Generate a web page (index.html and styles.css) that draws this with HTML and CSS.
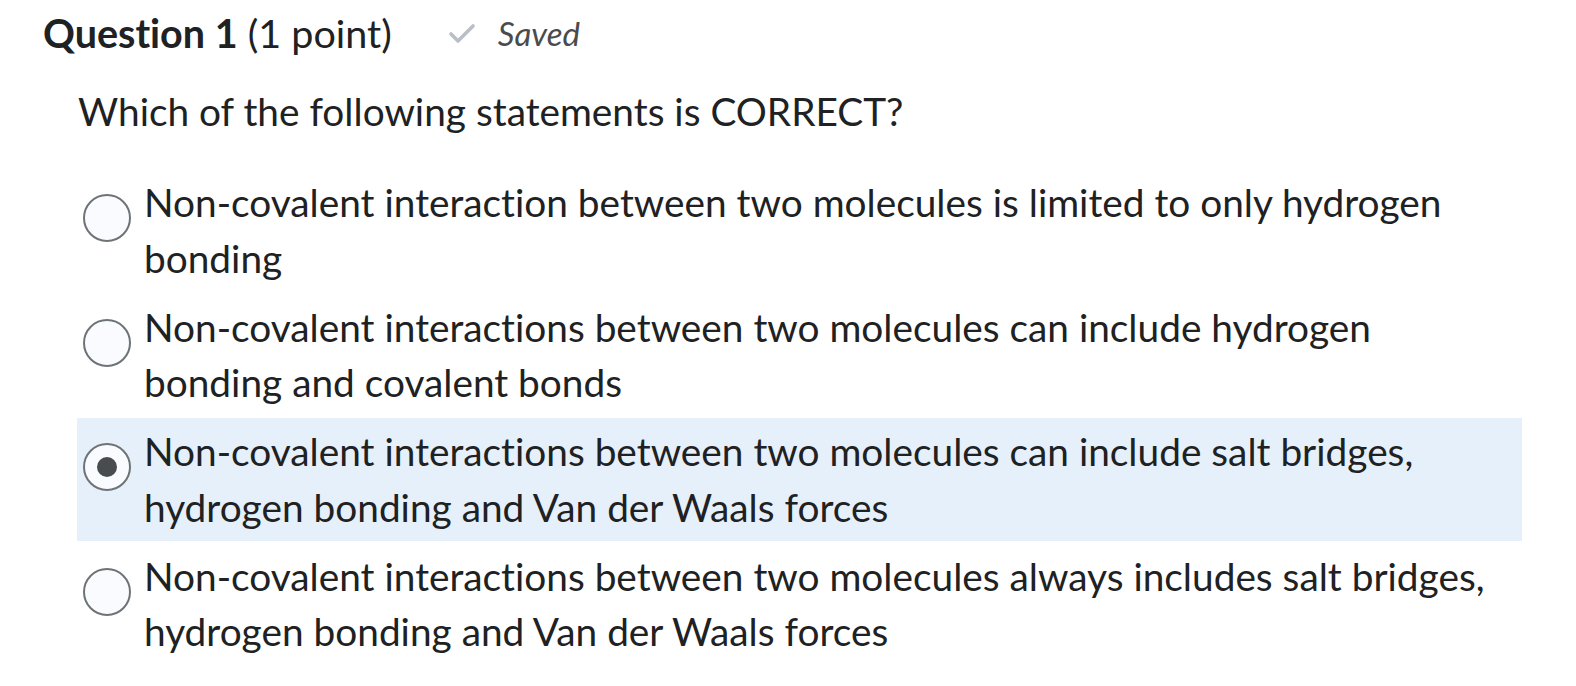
FILE: index.html
```html
<!DOCTYPE html>
<html>
<head>
<meta charset="utf-8">
<link rel="stylesheet" href="styles.css">
</head>
<body>
<div class="page">
  <div class="header">
    <h2 class="title"><strong>Question 1</strong> (1 point)</h2>
    <span class="saved">
      <svg class="check" viewBox="0 0 28 22" width="28" height="22"><path d="M3 12 L10 19 L25 4" fill="none" stroke="#b9bfc5" stroke-width="3.6" stroke-linecap="round" stroke-linejoin="round"/></svg>
      <em>Saved</em>
    </span>
  </div>
  <p class="question">Which of the following statements is CORRECT?</p>
  <div class="options">
    <label class="option">
      <span class="radio"></span>
      <span class="text">Non-covalent interaction between two molecules is limited to only hydrogen bonding</span>
    </label>
    <label class="option">
      <span class="radio"></span>
      <span class="text">Non-covalent interactions between two molecules can include hydrogen bonding and covalent bonds</span>
    </label>
    <label class="option selected">
      <span class="radio checked"></span>
      <span class="text">Non-covalent interactions between two molecules can include salt bridges, hydrogen bonding and Van der Waals forces</span>
    </label>
    <label class="option">
      <span class="radio"></span>
      <span class="text">Non-covalent interactions between two molecules always includes salt bridges, hydrogen bonding and Van der Waals forces</span>
    </label>
  </div>
</div>
</body>
</html>
```
FILE: styles.css
```css
html, body {
  margin: 0;
  padding: 0;
  background: #ffffff;
}
body {
  font-family: Lato, "Noto Sans", sans-serif;
  color: #202122;
  font-variant-ligatures: none;
}
.page {
  padding: 9px 0 0 43px;
}
.header {
  display: flex;
  align-items: center;
  height: 48px;
}
.title {
  margin: 0;
  font-size: 39.5px;
  font-weight: 400;
  line-height: 48px;
}
.title strong {
  font-weight: 700;
}
.saved {
  display: flex;
  align-items: center;
  gap: 22px;
  margin-left: 56px;
  color: #494c4e;
  font-size: 33px;
}
.saved em {
  font-style: italic;
}
.check {
  display: block;
}
.question {
  margin: 27px 0 0 35px;
  font-size: 38.8px;
  line-height: 55px;
}
.options {
  margin: 30px 0 0 34px;
  width: 1445px;
  display: flex;
  flex-direction: column;
  gap: 1.5px;
}
.option {
  display: flex;
  align-items: flex-start;
  gap: 13px;
  padding: 6px 20px 6px 6px;
  font-size: 38.8px;
  line-height: 55.5px;
}
.option.selected {
  background: #e6f0fb;
}
.radio {
  flex: none;
  box-sizing: border-box;
  width: 48px;
  height: 48px;
  margin-top: 19px;
  border: 2px solid #6e7376;
  border-radius: 50%;
  background: #f9fbff;
  display: flex;
  align-items: center;
  justify-content: center;
}
.radio.checked::after {
  content: "";
  width: 20px;
  height: 20px;
  border-radius: 50%;
  background: #494c4e;
}
.text {
  flex: 1;
}
```
